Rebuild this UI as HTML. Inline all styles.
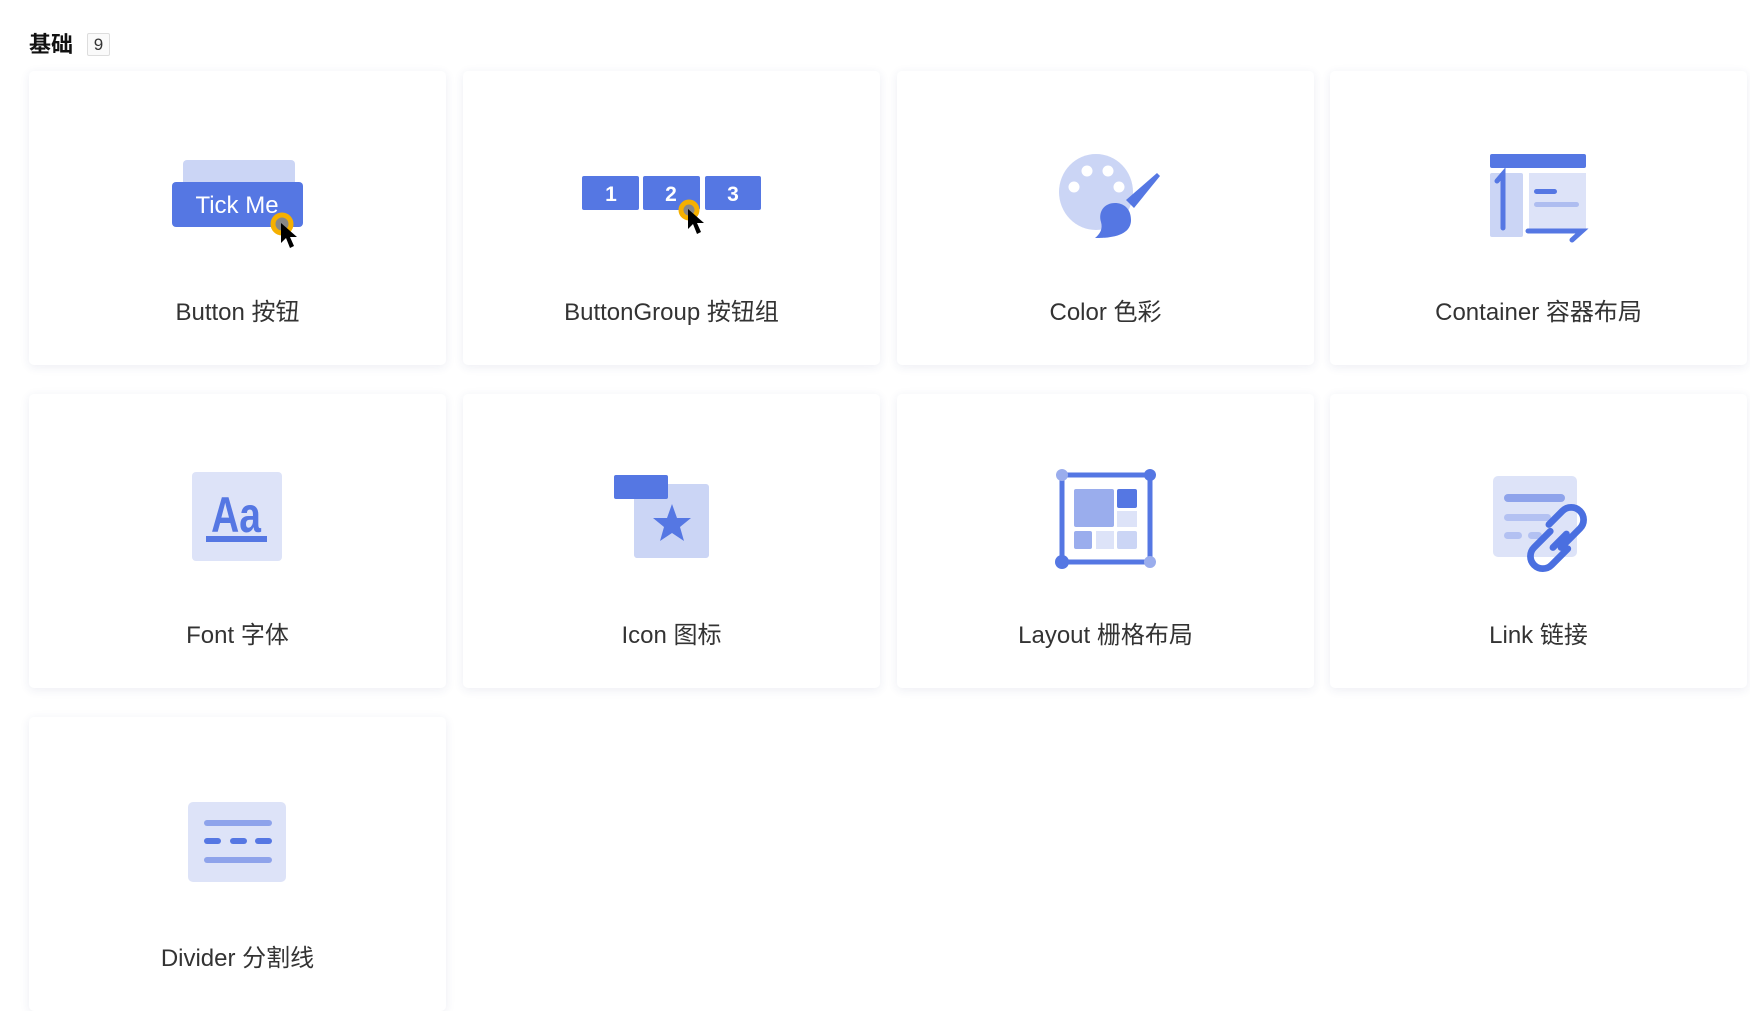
<!DOCTYPE html>
<html><head><meta charset="utf-8"><style>
html,body{margin:0;padding:0;background:#fff;width:1750px;height:984px;overflow:hidden;font-family:"Liberation Sans","Noto Sans CJK SC",sans-serif}
.title{position:absolute;left:29px;top:30px;font-size:22px;font-weight:bold;color:#111;line-height:30px}
.badge{position:absolute;left:87px;top:33px;width:21px;height:21px;border:1px solid #ddd;border-radius:2px;background:#fafafa;font-size:17px;text-align:center;line-height:21px;color:#333}
.card{position:absolute;width:417px;height:294px;background:#fff;border-radius:5px;box-shadow:0 2px 10px rgba(40,50,120,0.09)}
.lbl{position:absolute;left:0;right:0;top:227px;text-align:center;font-size:24px;color:#333;line-height:30px}
svg{position:absolute;left:0;top:0}
</style></head><body>
<div class="title">基础</div><div class="badge">9</div>
<div class="card" style="left:29px;top:71px"><div class="lbl">Button 按钮</div></div>
<div class="card" style="left:463px;top:71px"><div class="lbl">ButtonGroup 按钮组</div></div>
<div class="card" style="left:897px;top:71px"><div class="lbl">Color 色彩</div></div>
<div class="card" style="left:1330px;top:71px"><div class="lbl">Container 容器布局</div></div>
<div class="card" style="left:29px;top:394px"><div class="lbl">Font 字体</div></div>
<div class="card" style="left:463px;top:394px"><div class="lbl">Icon 图标</div></div>
<div class="card" style="left:897px;top:394px"><div class="lbl">Layout 栅格布局</div></div>
<div class="card" style="left:1330px;top:394px"><div class="lbl">Link 链接</div></div>
<div class="card" style="left:29px;top:717px"><div class="lbl">Divider 分割线</div></div>
<svg width="1750" height="984" viewBox="0 0 1750 984">
<!-- Button -->
<rect x="183" y="160" width="112" height="30" rx="4" fill="#cbd5f5"/>
<rect x="172" y="182" width="131" height="45" rx="4" fill="#5577e3"/>
<text x="237" y="213" text-anchor="middle" font-family="Liberation Sans" font-size="24" fill="#fff">Tick Me</text>
<circle cx="282" cy="224" r="9" fill="#888" stroke="#f5b000" stroke-width="5"/>
<path d="M281 223 L281 243 L286 238 L290 248 L294 246 L290 237 L297 237 Z" fill="#000"/>
<!-- ButtonGroup -->
<rect x="582" y="176" width="57" height="34" rx="2" fill="#5577e3"/>
<rect x="643" y="176" width="57" height="34" rx="2" fill="#5577e3"/>
<rect x="705" y="176" width="56" height="34" rx="2" fill="#5577e3"/>
<text x="611" y="201" text-anchor="middle" font-size="21" font-weight="bold" fill="#fff" font-family="Liberation Sans">1</text>
<text x="671" y="201" text-anchor="middle" font-size="21" font-weight="bold" fill="#fff" font-family="Liberation Sans">2</text>
<text x="733" y="201" text-anchor="middle" font-size="21" font-weight="bold" fill="#fff" font-family="Liberation Sans">3</text>
<circle cx="689" cy="210" r="8" fill="#888" stroke="#f5b000" stroke-width="5"/>
<path d="M688 209 L688 229 L693 224 L697 234 L701 232 L697 223 L704 223 Z" fill="#000"/>
<!-- Color -->
<ellipse cx="1096" cy="192" rx="37" ry="38" fill="#cbd5f5"/>
<circle cx="1087" cy="171" r="5.5" fill="#fff"/><circle cx="1108" cy="171" r="5.5" fill="#fff"/>
<circle cx="1074" cy="187" r="5.5" fill="#fff"/><circle cx="1119" cy="187" r="5.5" fill="#fff"/>
<path d="M1126 200 L1157 173 L1160 176 L1134 208 Z" fill="#5577e3"/>
<path d="M1097 238 C1110 238 1131 236 1131 220 C1131 208 1123 203 1115 203 C1104 203 1098 212 1101 222 C1103 229 1100 234 1095 238 Z" fill="#5577e3"/>
<!-- Container -->
<rect x="1490" y="154" width="96" height="14" rx="2" fill="#5577e3"/>
<rect x="1490" y="173" width="33" height="64" rx="2" fill="#cbd5f5"/>
<rect x="1529" y="173" width="57" height="58" fill="#dde3f8"/>
<path d="M1503 228 L1503 174 L1497 181" stroke="#5577e3" stroke-width="5" fill="none" stroke-linecap="round"/>
<rect x="1534" y="189" width="23" height="5" rx="2.5" fill="#5577e3"/>
<rect x="1534" y="202" width="45" height="5" rx="2.5" fill="#aebdf0"/>
<path d="M1528 231 L1582 231 L1572 240" stroke="#5577e3" stroke-width="5" fill="none" stroke-linecap="round"/>
<!-- Font -->
<rect x="192" y="472" width="90" height="89" rx="4" fill="#dde3f8"/>
<text x="0" y="0" text-anchor="middle" font-family="Liberation Sans" font-size="50" font-weight="bold" fill="#5577e3" transform="translate(236 532) scale(0.78 1)">Aa</text>
<rect x="206" y="536" width="61" height="6" fill="#5577e3"/>
<!-- Icon -->
<rect x="634" y="484" width="75" height="74" rx="3" fill="#cbd5f5"/>
<rect x="614" y="475" width="54" height="24" rx="2" fill="#5577e3"/>
<path d="M672 504 L677 518 L691 518 L680 527 L684 541 L672 533 L660 541 L664 527 L653 518 L667 518 Z" fill="#5577e3"/>
<!-- Layout -->
<rect x="1062" y="475" width="88" height="87" fill="none" stroke="#5577e3" stroke-width="5"/>
<rect x="1074" y="489" width="40" height="38" rx="2" fill="#9aaded"/>
<rect x="1117" y="489" width="20" height="19" rx="2" fill="#5577e3"/>
<rect x="1117" y="511" width="20" height="16" fill="#dde3f8"/>
<rect x="1074" y="531" width="18" height="18" rx="2" fill="#9aaded"/>
<rect x="1096" y="531" width="18" height="18" fill="#dde3f8"/>
<rect x="1117" y="531" width="20" height="18" rx="2" fill="#cbd5f5"/>
<circle cx="1062" cy="475" r="6" fill="#9aaded"/><circle cx="1150" cy="475" r="6" fill="#5577e3"/>
<circle cx="1062" cy="562" r="7" fill="#5577e3"/><circle cx="1150" cy="562" r="6" fill="#9aaded"/>
<!-- Link -->
<rect x="1493" y="476" width="84" height="81" rx="5" fill="#dde3f8"/>
<rect x="1504" y="494" width="61" height="8" rx="4" fill="#8ea3eb"/>
<rect x="1504" y="514" width="47" height="7" rx="3.5" fill="#b3c1f2"/>
<rect x="1504" y="532" width="18" height="7" rx="3.5" fill="#b3c1f2"/>
<rect x="1528" y="532" width="14" height="7" rx="3.5" fill="#b3c1f2"/>
<g fill="none" stroke="#4a6fe0" stroke-width="5" stroke-linecap="round" transform="translate(1557 538) scale(1.35) translate(-1559 -534)">
<path d="M1554 529 L1542 541 A9 9 0 0 0 1555 554 L1567 542"/>
<path d="M1562 541 L1576 527 A9 9 0 0 0 1563 514 L1553 524"/>
<path d="M1566 531 L1556 541"/>
</g>
<!-- Divider -->
<rect x="188" y="802" width="98" height="80" rx="5" fill="#dde3f8"/>
<rect x="204" y="820" width="68" height="6" rx="3" fill="#8ea3eb"/>
<rect x="204" y="838" width="17" height="6" rx="3" fill="#5577e3"/>
<rect x="230" y="838" width="17" height="6" rx="3" fill="#5577e3"/>
<rect x="255" y="838" width="17" height="6" rx="3" fill="#5577e3"/>
<rect x="204" y="857" width="68" height="6" rx="3" fill="#8ea3eb"/>
</svg>
</body></html>
